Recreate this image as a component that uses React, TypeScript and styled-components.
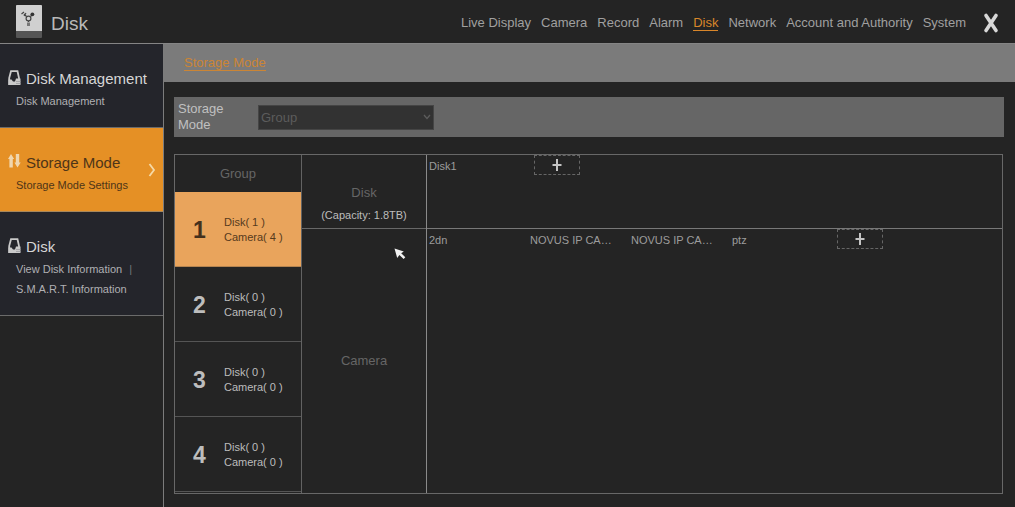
import React from "react";
import styled, { createGlobalStyle } from "styled-components";

const Global = createGlobalStyle`
  *, *::before, *::after { box-sizing: border-box; }
  body {
    margin: 0;
    background: #242424;
    color: #b4b4b4;
    font-family: "Liberation Sans", Arial, sans-serif;
    font-size: 11px;
    line-height: 15px;
  }
  h1, h2, h3, p { margin: 0; font-weight: 400; }
  button { font: inherit; color: inherit; background: none; border: 0; padding: 0; }
`;

const Page = styled.div`
  min-height: 100vh;
  display: flex;
  flex-direction: column;
`;

const Header = styled.header`
  height: 44px;
  display: flex;
  align-items: center;
  padding: 0 16px;
  border-bottom: 1px solid #858585;
`;

const Title = styled.h1`
  margin-left: 9px;
  padding-top: 4px;
  font-size: 19px;
  line-height: 22px;
  color: #b9b9b9;
`;

const Nav = styled.nav`
  margin-left: auto;
  display: flex;
  gap: 10px;
  padding-top: 3px;
`;

const NavLink = styled.a<{ $active?: boolean }>`
  font-size: 13px;
  line-height: 15px;
  color: ${(p) => (p.$active ? "#d9862a" : "#a0a0a0")};
  text-decoration: none;
  border-bottom: 1px solid ${(p) => (p.$active ? "#d9862a" : "transparent")};
`;

const CloseButton = styled.button`
  display: flex;
  margin-left: 17px;
  padding-top: 3px;
`;

const Body = styled.div`
  flex: 1;
  display: flex;
`;

const Sidebar = styled.aside`
  flex: 0 0 164px;
  border-right: 1px solid #7c7c7c;
`;

const Section = styled.section<{ $active?: boolean }>`
  position: relative;
  padding: 26px 8px 16px;
  color: ${(p) => (p.$active ? "#4e3518" : "#b0b0b3")};
  background: ${(p) => (p.$active ? "#e59025" : "#24252b")};
  border-bottom: 1px solid ${(p) => (p.$active ? "#a8885c" : "#6b6b6b")};
`;

const SectionTitle = styled.h2<{ $active?: boolean }>`
  display: flex;
  gap: 5px;
  font-size: 15px;
  line-height: 18px;
  white-space: nowrap;
  color: ${(p) => (p.$active ? "#4e3518" : "#d6d6d6")};
`;

const SectionLinks = styled.div`
  display: flex;
  flex-wrap: wrap;
  column-gap: 7px;
  padding: 3px 0 0 8px;
`;

const SectionLink = styled.a`
  font-size: 11px;
  line-height: 20px;
  color: inherit;
  text-decoration: none;
`;

const Divider = styled.span`
  font-size: 11px;
  line-height: 20px;
  color: #77777a;
`;

const Arrow = styled.svg`
  position: absolute;
  right: 7px;
  top: 35px;
`;

const Main = styled.main`
  flex: 1;
  min-width: 0;
`;

const TabBar = styled.div`
  height: 38px;
  padding: 12px 20px 0;
  background: #7b7b7b;
`;

const Tab = styled.a`
  display: inline-block;
  font-size: 13px;
  line-height: 14px;
  color: #cb8535;
  text-decoration: none;
  border-bottom: 1px solid #cb8535;
`;

const Content = styled.div`
  padding: 15px 12px 14px 10px;
`;

const ModeBar = styled.div`
  display: flex;
  align-items: center;
  height: 40px;
  margin-right: -1px;
  padding: 0 4px;
  background: #666;
`;

const ModeLabel = styled.label`
  width: 80px;
  padding-right: 24px;
  font-size: 13px;
  line-height: 16px;
  color: #c0c0c0;
`;

const SelectBox = styled.div`
  position: relative;
  width: 176px;
  height: 25px;
`;

const Select = styled.select`
  appearance: none;
  width: 100%;
  height: 100%;
  padding: 0 2px;
  border: 1px solid #454545;
  border-radius: 0;
  background: #323232;
  color: #5c5c5c;
  font: 13px "Liberation Sans", Arial, sans-serif;
  opacity: 1;
`;

const SelectArrow = styled.svg`
  position: absolute;
  right: 3px;
  top: 8px;
  pointer-events: none;
`;

const Panel = styled.div`
  display: grid;
  grid-template-columns: 126px 125px 1fr;
  margin-top: 17px;
  border: 1px solid #686868;
`;

const Groups = styled.div`
  padding-bottom: 1px;
`;

const Heading = styled.h3`
  font-size: 13px;
  line-height: 16px;
  text-align: center;
  color: #666;
`;

const GroupHead = styled(Heading)`
  height: 37px;
  padding-top: 11px;
`;

const GroupRow = styled.button<{ $active?: boolean }>`
  display: flex;
  align-items: center;
  width: 100%;
  height: 75px;
  padding: 1px 0 0 18px;
  text-align: left;
  color: ${(p) => (p.$active ? "#563a1c" : "#bdbdbd")};
  background: ${(p) => (p.$active ? "#e9a45c" : "transparent")};
  border-bottom: 1px solid ${(p) => (p.$active ? "#b58450" : "#555")};
`;

const GroupNumber = styled.span<{ $active?: boolean }>`
  width: 31px;
  font-size: 23px;
  line-height: 26px;
  font-weight: 700;
  color: ${(p) => (p.$active ? "#44301c" : "#bdbdbd")};
`;

const Kinds = styled.div`
  display: flex;
  flex-direction: column;
  border-left: 1px solid #626262;
`;

const Kind = styled.div<{ $grow?: boolean }>`
  position: relative;
  display: flex;
  flex-direction: column;
  justify-content: ${(p) => (p.$grow ? "center" : "flex-end")};
  flex: ${(p) => (p.$grow ? "1" : "0 0 74px")};
  gap: 7px;
  padding-bottom: ${(p) => (p.$grow ? "0" : "6px")};
  text-align: center;
  border-bottom: ${(p) => (p.$grow ? "0" : "1px solid #686868")};
`;

const Capacity = styled.p`
  font-size: 11px;
  line-height: 14px;
  color: #bdbdbd;
`;

const Pointer = styled.svg`
  position: absolute;
  left: 92px;
  top: 19px;
`;

const Lists = styled.div`
  display: flex;
  flex-direction: column;
  border-left: 1px solid #8a8a8a;
`;

const Items = styled.ul<{ $grow?: boolean }>`
  display: flex;
  align-items: flex-start;
  flex: ${(p) => (p.$grow ? "1" : "0 0 74px")};
  margin: 0;
  padding: 0 0 0 2px;
  list-style: none;
  border-bottom: ${(p) => (p.$grow ? "0" : "1px solid #787878")};
`;

const Item = styled.li`
  width: 101px;
  padding: 4px 0;
  line-height: 14px;
  white-space: nowrap;
  color: #9c9c9c;
`;

const AddItem = styled.li`
  padding-left: 4px;
`;

const AddButton = styled.button`
  display: flex;
  align-items: center;
  justify-content: center;
  width: 46px;
  height: 20px;
  border: 1px dashed #666;
`;

const DriveIcon = () => (
  <svg width="26" height="33" viewBox="0 0 26 33" aria-hidden="true">
    <rect width="26" height="33" rx="1" fill="#555" />
    <path d="M1 0H25Q26 0 26 1V26H0V1Q0 0 1 0Z" fill="#d0d0d0" />
    <g fill="none" stroke="#444" strokeWidth="1.2">
      <circle cx="12.5" cy="13.5" r="2.4" />
      <path d="M10.5 11.5L8 9M14.5 11.5L16 10M12.5 16V17" />
      <path d="M5.5 9L8 7M8 11L10 8" />
    </g>
    <circle cx="16.4" cy="9.3" r="1.9" fill="#333" />
    <path d="M11 17.5H14V21H11Z" fill="#777" />
  </svg>
);

const TrayIcon = () => (
  <svg width="13" height="16" viewBox="0 0 13 16" aria-hidden="true">
    <path d="M3 1.2H9.5L11 8V14H1.2V8Z" fill="none" stroke="#c9c9c9" strokeWidth="1.8" />
    <path d="M0.5 9.5H3.5L5 11.5H7L8 8.5H12.5V15H0.5Z" fill="#c9c9c9" />
    <path d="M8 11.5H12.5M8 13.5H12.5" stroke="#9a9a9e" strokeWidth="0.8" />
  </svg>
);

const ArrowsIcon = () => (
  <svg width="13" height="16" viewBox="0 0 13 16" aria-hidden="true">
    <path d="M3 0L6.2 5H4.8V13.5H1.4V5H0Z" fill="#f0d6ae" />
    <path d="M7.8 0H11.2V8.5H12.7L9.5 13.5L6.4 8.5H7.8Z" fill="#f0d6ae" />
  </svg>
);

const PlusIcon = () => (
  <svg width="10" height="12" viewBox="0 0 10 12" aria-hidden="true">
    <path d="M5 0V12M0.5 6H9.5" stroke="#c4c4c4" strokeWidth="2" />
  </svg>
);

const navItems = [
  "Live Display",
  "Camera",
  "Record",
  "Alarm",
  "Disk",
  "Network",
  "Account and Authority",
  "System",
];

const groups = [
  { id: 1, disks: 1, cameras: 4 },
  { id: 2, disks: 0, cameras: 0 },
  { id: 3, disks: 0, cameras: 0 },
  { id: 4, disks: 0, cameras: 0 },
];

const disks = ["Disk1"];
const cameras = ["2dn", "NOVUS IP CA…", "NOVUS IP CA…", "ptz"];

function ItemList({ items, label, grow }: { items: string[]; label: string; grow?: boolean }) {
  return (
    <Items $grow={grow}>
      {items.map((item, i) => (
        <Item key={i}>{item}</Item>
      ))}
      <AddItem>
        <AddButton type="button" aria-label={label}>
          <PlusIcon />
        </AddButton>
      </AddItem>
    </Items>
  );
}

export default function App() {
  return (
    <>
      <Global />
      <Page>
        <Header>
          <DriveIcon />
          <Title>Disk</Title>
          <Nav>
            {navItems.map((item) => (
              <NavLink key={item} href="#" $active={item === "Disk"}>
                {item}
              </NavLink>
            ))}
          </Nav>
          <CloseButton type="button" aria-label="Close">
            <svg width="16" height="20" viewBox="0 0 16 20" aria-hidden="true">
              <path d="M3 2.5L13 17.5M13 2.5L3 17.5" stroke="#d8d8d8" strokeWidth="3.6" strokeLinecap="round" />
            </svg>
          </CloseButton>
        </Header>
        <Body>
          <Sidebar>
            <Section>
              <SectionTitle>
                <TrayIcon />
                Disk Management
              </SectionTitle>
              <SectionLinks>
                <SectionLink href="#">Disk Management</SectionLink>
              </SectionLinks>
            </Section>
            <Section $active>
              <SectionTitle $active>
                <ArrowsIcon />
                Storage Mode
              </SectionTitle>
              <SectionLinks>
                <SectionLink href="#">Storage Mode Settings</SectionLink>
              </SectionLinks>
              <Arrow width="8" height="14" viewBox="0 0 8 14" aria-hidden="true">
                <path d="M1.5 1L6 7L1.5 13" fill="none" stroke="#f5d9a6" strokeWidth="1.8" />
              </Arrow>
            </Section>
            <Section>
              <SectionTitle>
                <TrayIcon />
                Disk
              </SectionTitle>
              <SectionLinks>
                <SectionLink href="#">View Disk Information</SectionLink>
                <Divider>|</Divider>
                <SectionLink href="#">S.M.A.R.T. Information</SectionLink>
              </SectionLinks>
            </Section>
          </Sidebar>
          <Main>
            <TabBar>
              <Tab href="#">Storage Mode</Tab>
            </TabBar>
            <Content>
              <ModeBar>
                <ModeLabel htmlFor="mode">Storage Mode</ModeLabel>
                <SelectBox>
                  <Select id="mode" defaultValue="Group" disabled>
                    <option>Group</option>
                  </Select>
                  <SelectArrow width="8" height="8" viewBox="0 0 8 8" aria-hidden="true">
                    <path d="M1 2L4 5.5L7 2" fill="none" stroke="#5c5c5c" strokeWidth="1.3" />
                  </SelectArrow>
                </SelectBox>
              </ModeBar>
              <Panel>
                <Groups>
                  <GroupHead>Group</GroupHead>
                  {groups.map((g) => (
                    <GroupRow key={g.id} type="button" $active={g.id === 1}>
                      <GroupNumber $active={g.id === 1}>{g.id}</GroupNumber>
                      <span>
                        Disk( {g.disks} )<br />
                        Camera( {g.cameras} )
                      </span>
                    </GroupRow>
                  ))}
                </Groups>
                <Kinds>
                  <Kind>
                    <Heading>Disk</Heading>
                    <Capacity>(Capacity: 1.8TB)</Capacity>
                  </Kind>
                  <Kind $grow>
                    <Heading>Camera</Heading>
                    <Pointer width="13" height="13" viewBox="0 0 13 13" aria-hidden="true">
                      <path
                        d="M0.5 0.5L9.8 3.5L7.2 5.2L11.3 9.2L9.6 11L5.4 7L3.2 10Z"
                        fill="#f2f2f2"
                      />
                    </Pointer>
                  </Kind>
                </Kinds>
                <Lists>
                  <ItemList items={disks} label="Add disk" />
                  <ItemList items={cameras} label="Add camera" grow />
                </Lists>
              </Panel>
            </Content>
          </Main>
        </Body>
      </Page>
    </>
  );
}
